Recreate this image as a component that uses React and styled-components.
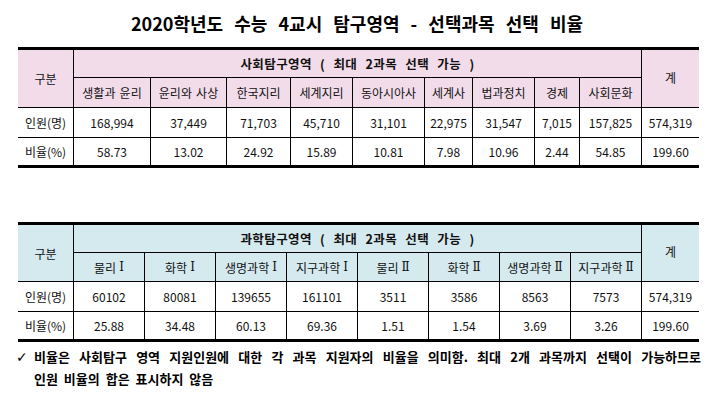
import React from "react";
import styled, { createGlobalStyle } from "styled-components";

const Global = createGlobalStyle`
  html, body { margin: 0; padding: 0; background: #fff; }
  body {
    font-family: "Noto Sans CJK KR", "Noto Sans", "Liberation Sans", sans-serif;
    color: #000;
    width: 714px;
  }
`;

const Page = styled.div`
  width: 714px;
  height: 407px;
  overflow: hidden;
  display: flex;
  flex-direction: column;
`;

const Title = styled.h1`
  margin: 10px 0 11px;
  height: 26px;
  line-height: 26px;
  font-size: 18px;
  font-weight: 700;
  text-align: center;
  word-spacing: 7px;
  letter-spacing: 0;
`;

const Grid = styled.div`
  margin-left: 18px;
  width: 681px;
  display: grid;
  grid-template-columns: ${(p) => p.$cols};
  grid-template-rows: ${(p) => p.$rows};
  border-top: 3px solid #000;
  border-bottom: 3px solid #000;
  margin-top: ${(p) => p.$top || 0}px;
`;

const Cell = styled.div`
  box-sizing: border-box;
  display: flex;
  align-items: center;
  justify-content: center;
  white-space: nowrap;
  font-size: ${(p) => (p.$bold ? "12.5px" : "12px")};
  font-weight: ${(p) => (p.$bold ? 700 : 400)};
  letter-spacing: ${(p) => (p.$bold ? "0.4px" : "0")};
  word-spacing: ${(p) => (p.$bold ? "5px" : "1.5px")};
  color: #111;
  background: ${(p) => p.$bg || "#fff"};
  border-right: ${(p) => (p.$noRight ? "none" : "1px solid #000")};
  border-bottom: ${(p) => (p.$noBottom ? "none" : "1px solid #000")};
  grid-column: ${(p) => p.$col || "auto"};
  grid-row: ${(p) => p.$row || "auto"};
  padding-bottom: ${(p) => (p.$lift ? "3px" : "0")};
`;

const Roman = styled.span`
  font-family: "DejaVu Serif", "Liberation Serif", serif;
  font-size: 12px;
  margin-left: 3px;
`;

const Footer = styled.div`
  margin-top: 4px;
  display: flex;
  align-items: flex-start;
`;

const Check = styled.span`
  width: 16px;
  margin-left: 16px;
  margin-right: 2px;
  line-height: 22px;
  font-size: 14px;
  font-family: "DejaVu Sans", sans-serif;
`;

const FootText = styled.div`
  width: 667px;
  display: flex;
  flex-direction: column;
`;

const FootLine = styled.div`
  font-size: 13px;
  font-weight: 700;
  line-height: 22px;
  white-space: ${(p) => (p.$justify ? "normal" : "nowrap")};
  word-spacing: ${(p) => (p.$justify ? "0" : "3px")};
  text-align: ${(p) => (p.$justify ? "justify" : "left")};
  text-align-last: ${(p) => (p.$justify ? "justify" : "left")};
`;

const PINK = "#f2dcea";
const BLUE = "#d5eaef";

function Subject({ name }) {
  const m = name.match(/^(.*?)([ⅠⅡ])$/);
  if (!m) return name;
  return (
    <>
      {m[1]}
      <Roman>{m[2]}</Roman>
    </>
  );
}

function Table({ bg, cols, rows, top, title, subjects, counts, ratios, total, totalRatio }) {
  const n = subjects.length;
  return (
    <Grid $cols={cols} $rows={rows} $top={top}>
      <Cell $bg={bg} $row="1 / span 2" $col="1">구분</Cell>
      <Cell $bg={bg} $bold $col={`2 / span ${n}`} $row="1">{title}</Cell>
      <Cell $bg={bg} $noRight $row="1 / span 2" $col={`${n + 2}`} $lift>계</Cell>
      {subjects.map((s) => (
        <Cell key={s} $bg={bg} $row="2">
          <Subject name={s} />
        </Cell>
      ))}
      <Cell>인원(명)</Cell>
      {counts.map((c, i) => (
        <Cell key={i}>{c}</Cell>
      ))}
      <Cell $noRight>{total}</Cell>
      <Cell $noBottom>비율(%)</Cell>
      {ratios.map((r, i) => (
        <Cell key={i} $noBottom>{r}</Cell>
      ))}
      <Cell $noBottom $noRight>{totalRatio}</Cell>
    </Grid>
  );
}

export default function App() {
  return (
    <Page>
      <Global />
      <Title>2020학년도 수능 4교시 탐구영역 - 선택과목 선택 비율</Title>
      <Table
        bg={PINK}
        cols="56px 77px 76px 64px 62px 72px 48px 62px 45px 62px 57px"
        rows="28px 30px 30px 27px"
        title="사회탐구영역 ( 최대 2과목 선택 가능 )"
        subjects={["생활과 윤리", "윤리와 사상", "한국지리", "세계지리", "동아시아사", "세계사", "법과정치", "경제", "사회문화"]}
        counts={["168,994", "37,449", "71,703", "45,710", "31,101", "22,975", "31,547", "7,015", "157,825"]}
        ratios={["58.73", "13.02", "24.92", "15.89", "10.81", "7.98", "10.96", "2.44", "54.85"]}
        total="574,319"
        totalRatio="199.60"
      />
      <Table
        bg={BLUE}
        top={54}
        cols="56px 71px 71px 71px 71px 71px 71px 71px 71px 57px"
        rows="28px 29px 30px 27px"
        title="과학탐구영역 ( 최대 2과목 선택 가능 )"
        subjects={["물리Ⅰ", "화학Ⅰ", "생명과학Ⅰ", "지구과학Ⅰ", "물리Ⅱ", "화학Ⅱ", "생명과학Ⅱ", "지구과학Ⅱ"]}
        counts={["60102", "80081", "139655", "161101", "3511", "3586", "8563", "7573"]}
        ratios={["25.88", "34.48", "60.13", "69.36", "1.51", "1.54", "3.69", "3.26"]}
        total="574,319"
        totalRatio="199.60"
      />
      <Footer>
        <Check>✓</Check>
        <FootText>
          <FootLine $justify>
            비율은 사회탐구 영역 지원인원에 대한 각 과목 지원자의 비율을 의미함. 최대 2개 과목까지 선택이 가능하므로
          </FootLine>
          <FootLine>인원 비율의 합은 표시하지 않음</FootLine>
        </FootText>
      </Footer>
    </Page>
  );
}
